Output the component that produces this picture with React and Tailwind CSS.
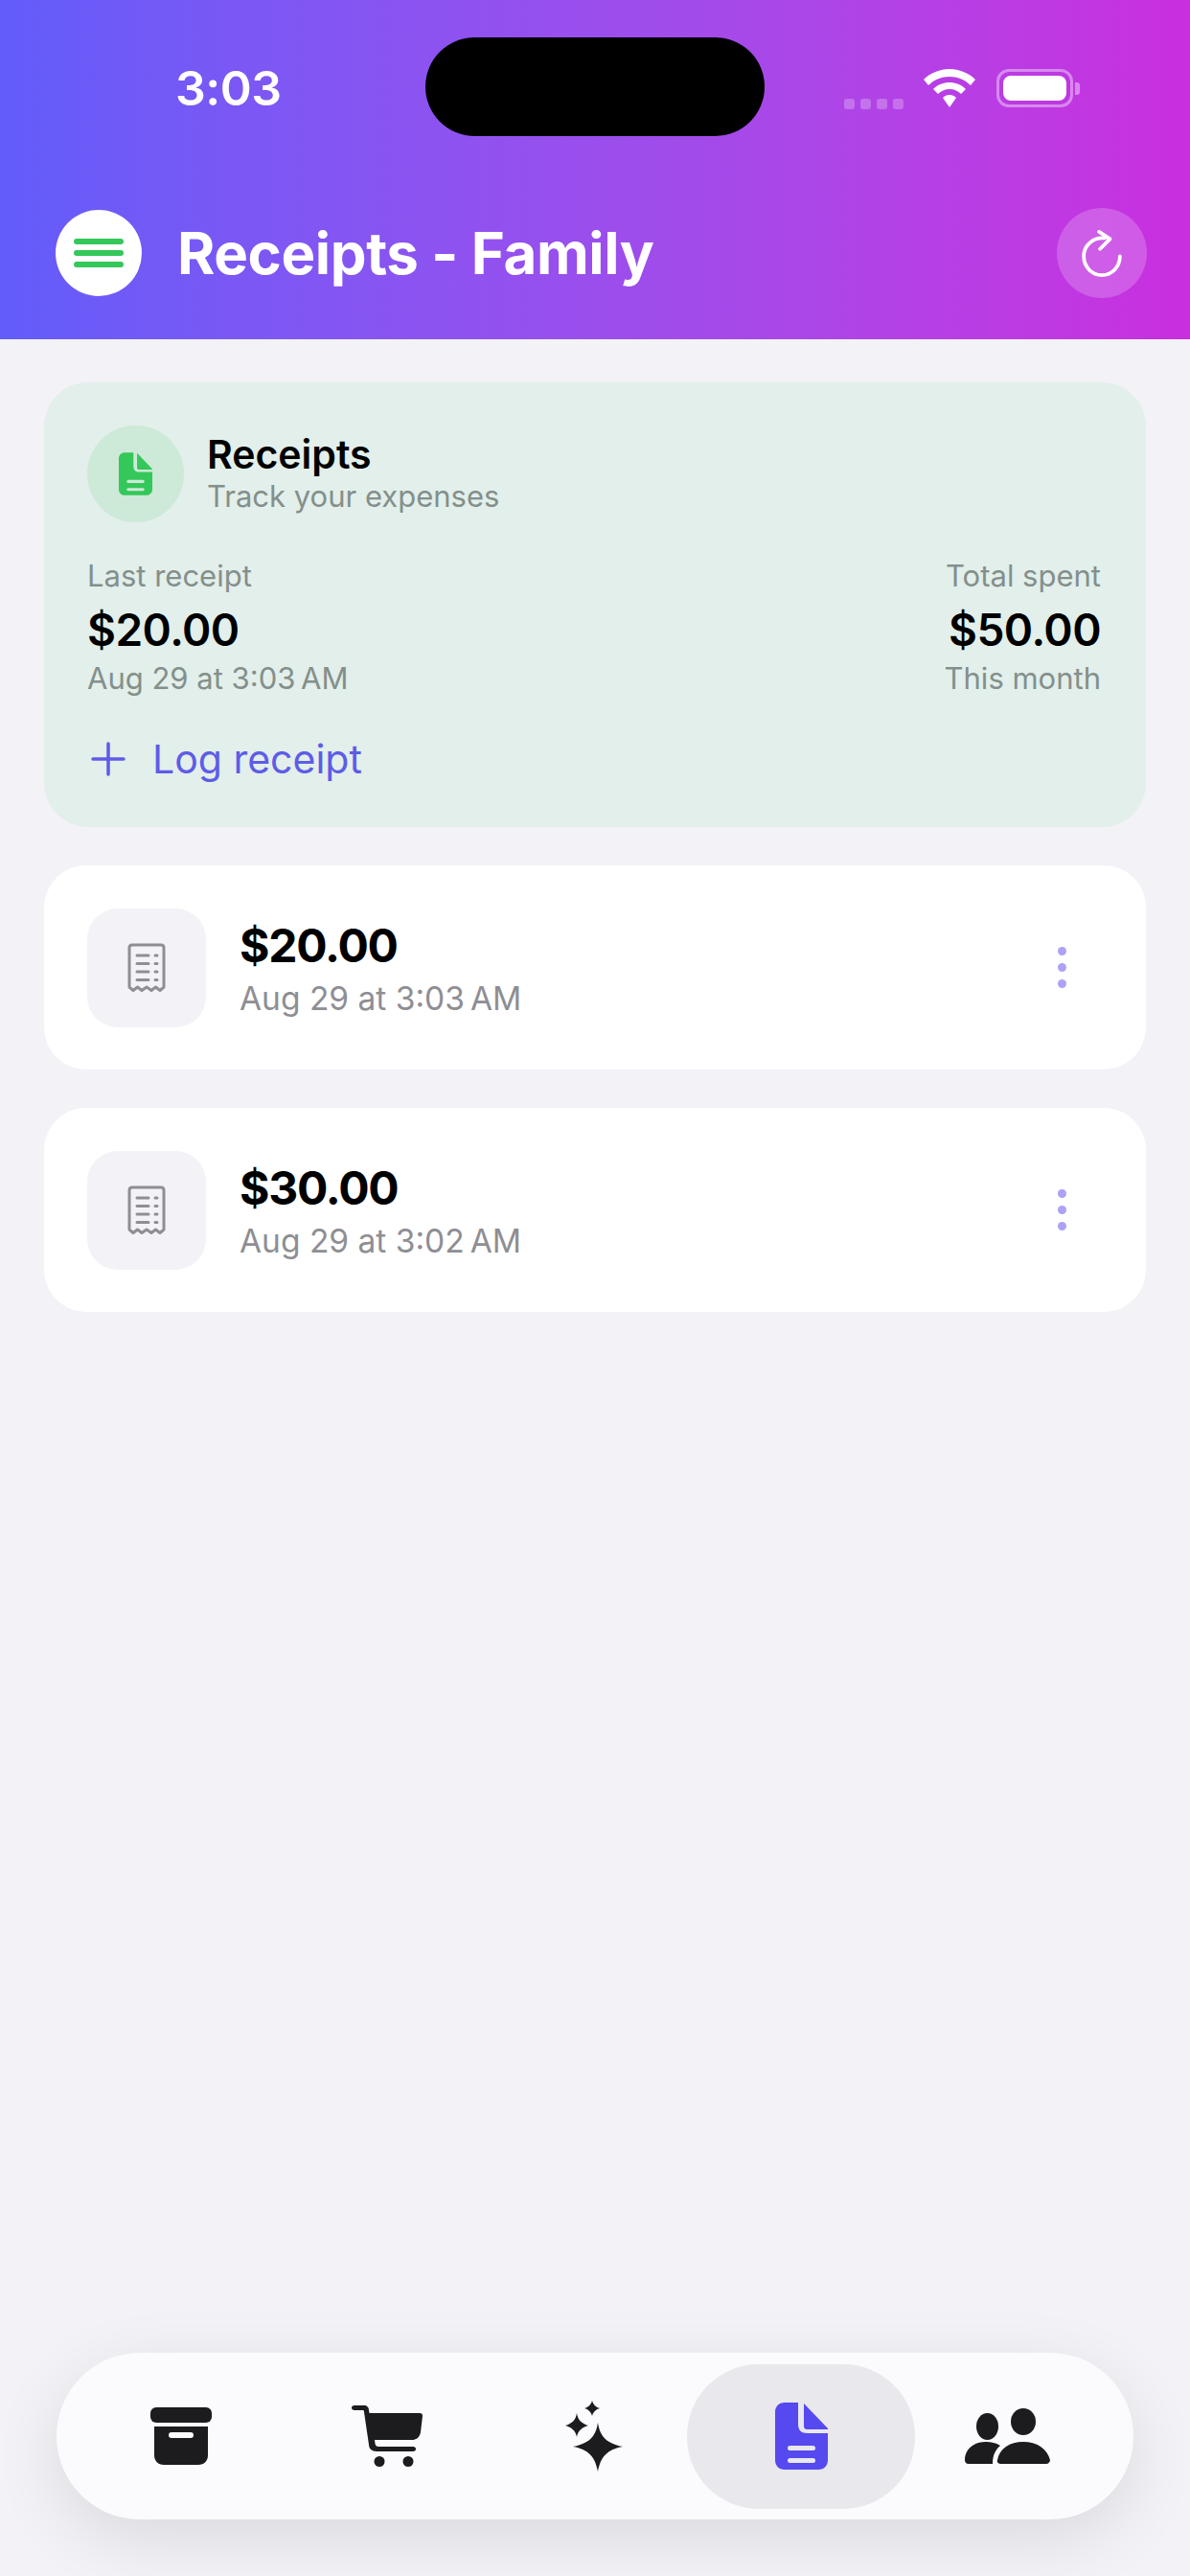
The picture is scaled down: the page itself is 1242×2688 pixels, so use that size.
const font = { fontFamily: "Inter, 'Noto Sans', sans-serif" };

function DocIcon({ className, cut = "#ffffff" }) {
  return (
    <svg viewBox="0 0 55 70" className={className} fill="currentColor">
      <path d="M10 0H24V22C24 29 27 32 34 32H55V60C55 66 51 70 45 70H10C4 70 0 66 0 60V10C0 4 4 0 10 0Z" />
      <path d="M30 1L55 27V28H34C31 28 30 27 30 24Z" />
      <rect x="13" y="45" width="29" height="5" rx="2.5" fill={cut} />
      <rect x="13" y="58" width="29" height="5" rx="2.5" fill={cut} />
    </svg>
  );
}

function ReceiptIcon() {
  return (
    <svg viewBox="0 0 40 52" className="w-[40px] h-[52px]" fill="none" stroke="#8e8e93">
      <path
        d="M2 46V5C2 3 3 2 5 2H35C37 2 38 3 38 5V46L34 49.5L29.5 46L25 49.5L20 46L15 49.5L10.5 46L6 49.5Z"
        strokeWidth="3"
        strokeLinejoin="round"
      />
      <g strokeWidth="3" strokeLinecap="round">
        <path d="M10 13H22M29 13H31" />
        <path d="M10 21.5H22M29 21.5H31" />
        <path d="M10 30H22M29 30H31" />
        <path d="M10 38.5H22M29 38.5H31" />
      </g>
    </svg>
  );
}

function Row({ amount, date }) {
  return (
    <div className="flex items-center h-[213px] bg-white rounded-[44px] pl-[45px] pr-[83px]">
      <div className="w-[124px] h-[124px] rounded-[32px] bg-[#f2f2f7] flex items-center justify-center">
        <ReceiptIcon />
      </div>
      <div className="ml-[35px] flex-1">
        <div className="text-[48px] leading-[60px] font-bold tracking-[-1.2px] text-black">{amount}</div>
        <div className="text-[33.5px] leading-[42px] mt-[4px] text-[#8e8e93]">{date}</div>
      </div>
      <div className="flex flex-col gap-[8px]">
        <span className="w-[9px] h-[9px] rounded-full bg-[#aca2f6]" />
        <span className="w-[9px] h-[9px] rounded-full bg-[#aca2f6]" />
        <span className="w-[9px] h-[9px] rounded-full bg-[#aca2f6]" />
      </div>
    </div>
  );
}

function TabBar() {
  return (
    <div className="mt-auto mb-[59px] mx-[59px] h-[174px] rounded-[87px] bg-[#fbfbfe] shadow-[0_20px_70px_rgba(0,0,0,0.1)] flex items-center text-[#1c1c1e]">
      <div className="w-[260px] flex justify-center">
        <svg viewBox="0 0 64 60" className="w-[64px] h-[60px]" fill="currentColor">
          <rect x="0" y="0" width="64" height="16" rx="6" />
          <path d="M4 20H60V50C60 56 56 60 50 60H14C8 60 4 56 4 50ZM22 26C20 26 19 27 19 29C19 31 20 32 22 32H42C44 32 45 31 45 29C45 27 44 26 42 26Z" fillRule="evenodd" />
        </svg>
      </div>
      <div className="w-[170px] flex justify-center">
        <svg viewBox="0 0 74 64" className="w-[74px] h-[64px]" fill="currentColor">
          <path d="M3 0H13C16 0 18 2 18 5L18.5 8H71C73 8 74 9 74 11L72 28C71 33 68 36 63 36H24L24.500 40C25 42 26 43 28 43H64C66 43 67 44 67 45.500C67 47 66 48 64 48H26C21 48 18 45 18 41L13 7C13 5 12 5 11 5H3C1 5 0 4 0 2.500C0 1 1 0 3 0Z" />
          <circle cx="29" cy="58.500" r="5.500" />
          <circle cx="59" cy="58.500" r="5.500" />
        </svg>
      </div>
      <div className="w-[228px] flex justify-center pl-[36px]">
        <svg viewBox="0 0 62 74" className="w-[62px] h-[74px]" fill="currentColor">
          <path d="M34 23C36 38 44 45 60 48C44 51 37 58 34 74C31 58 24 51 8 48C24 45 32 38 34 23Z" />
          <path d="M12 13C13 20 17 24 24 26C17 28 13 32 12 38C11 32 7 28 0 26C7 24 11 20 12 13Z" />
          <path d="M28 0C29 4 32 7 36 8C32 9 29 12 28 16C27 12 24 9 20 8C24 7 27 4 28 0Z" />
        </svg>
      </div>
      <div className="w-[238px] h-[151px] rounded-[75px] bg-[#e8e8ed] flex items-center justify-center">
        <DocIcon className="w-[55px] h-[70px] text-[#5649ef]" cut="#e8e8ed" />
      </div>
      <div className="w-[228px] flex justify-center pr-[35px]">
        <svg viewBox="0 0 89 58" className="w-[89px] h-[58px]" fill="currentColor">
          <ellipse cx="23.500" cy="14" rx="11.500" ry="14" transform="translate(0 5)" />
          <ellipse cx="61" cy="14" rx="13" ry="14" />
          <path d="M0 54C0 42 10 35 22 35C28 35 32 36 37 39C32 43 29 49 29 58H4C1 58 0 56 0 54Z" />
          <path d="M34 54C36 42 47 35 61 35C75 35 86 42 89 54C89 56 87 58 85 58H38C35 58 33 56 34 54Z" />
        </svg>
      </div>
    </div>
  );
}

export default function App() {
  return (
    <div style={font} className="w-[1242px] h-[2688px] bg-[#f2f2f7] flex flex-col overflow-hidden">
      <header className="relative h-[354px] bg-gradient-to-r from-[#625cfa] to-[#c92edf] pl-[58px] pr-[45px]">
        <div className="h-[217px] flex items-center">
          <span className="ml-[125px] mt-[-34px] w-[110px] text-[50px] font-semibold tracking-[-0.5px] text-white leading-none">3:03</span>
          <div className="ml-auto mt-[-34px] flex items-end">
            <div className="flex gap-[6px] mb-[-2px] mr-[21px]">
              <span className="w-[11px] h-[11px] rounded-[3px] bg-white/25" />
              <span className="w-[11px] h-[11px] rounded-[3px] bg-white/25" />
              <span className="w-[11px] h-[11px] rounded-[3px] bg-white/25" />
              <span className="w-[11px] h-[11px] rounded-[3px] bg-white/25" />
            </div>
            <svg viewBox="0 0 54 40" className="w-[54px] h-[40px] mr-[22px]" fill="#ffffff">
              <path d="M27 0C37 0 47 4 54 11L49 17C43 11 35 8 27 8C19 8 11 11 5 17L0 11C7 4 17 0 27 0Z" />
              <path d="M27 14C33 14 39 16 44 21L39 26C36 23 32 21 27 21C22 21 18 23 15 26L10 21C15 16 21 14 27 14Z" />
              <path d="M27 27C30 27 32 28 34 30L27 40L20 30C22 28 24 27 27 27Z" />
            </svg>
            <div className="w-[80px] h-[40px] rounded-[13px] border-[3px] border-white/40 p-[4px] mr-[2px]">
              <div className="w-full h-full rounded-[8px] bg-white" />
            </div>
            <span className="w-[5px] h-[13px] rounded-r-[3px] bg-white/40 mb-[13px] mr-[70px]" />
          </div>
        </div>
        <div className="absolute left-[444px] top-[39px] w-[354px] h-[103px] rounded-[52px] bg-black" />
        <div className="flex items-center h-[94px]">
          <button className="w-[90px] h-[90px] rounded-full bg-white flex flex-col items-center justify-center gap-[6px]">
            <span className="w-[52px] h-[6px] rounded-full bg-[#34c759]" />
            <span className="w-[52px] h-[6px] rounded-full bg-[#34c759]" />
            <span className="w-[52px] h-[6px] rounded-full bg-[#34c759]" />
          </button>
          <h1 className="ml-[37px] text-[60px] font-bold tracking-[-0.4px] text-white leading-none">Receipts - Family</h1>
          <button className="ml-auto w-[94px] h-[94px] rounded-full bg-white/20 flex items-center justify-center">
            <svg viewBox="0 0 44 52" className="w-[42px] h-[49px]" fill="none" stroke="#ffffff" strokeWidth="4" strokeLinecap="round" strokeLinejoin="round">
              <path d="M25 9C12 8 2 17 2 29C2 41 11 50 22 50C33 50 42 41 42 29" />
              <path d="M19 2L31 10L20 21" />
            </svg>
          </button>
        </div>
      </header>

      <main className="flex flex-col px-[46px] pt-[45px]">
        <section className="h-[464px] rounded-[46px] bg-[#e2efea] pl-[45px] pr-[47px] pt-[45px]">
          <div className="flex items-center">
            <div className="w-[101px] h-[101px] rounded-full bg-[#cde9d7] flex items-center justify-center">
              <DocIcon className="w-[35px] h-[45px] text-[#34c759]" cut="#cde9d7" />
            </div>
            <div className="ml-[24px] mt-[-4px]">
              <div className="text-[41px] leading-[50px] font-semibold text-black">Receipts</div>
              <div className="text-[31px] leading-[38px] text-[#848f8c]">Track your expenses</div>
            </div>
          </div>
          <div className="flex justify-between mt-[36px]">
            <div>
              <div className="text-[31px] leading-[40px] text-[#848f8c]">Last receipt</div>
              <div className="text-[46px] leading-[56px] mt-[8px] font-semibold tracking-[-0.5px] text-black">$20.00</div>
              <div className="text-[31px] leading-[46px] text-[#848f8c]">Aug 29 at 3:03{"\u202f"}AM</div>
            </div>
            <div className="text-right">
              <div className="text-[31px] leading-[40px] text-[#848f8c]">Total spent</div>
              <div className="text-[46px] leading-[56px] mt-[8px] font-semibold tracking-[-0.5px] text-black">$50.00</div>
              <div className="text-[31px] leading-[46px] text-[#848f8c]">This month</div>
            </div>
          </div>
          <div className="flex items-center mt-[36px] text-[#5e5ce6]">
            <svg viewBox="0 0 36 36" className="w-[36px] h-[36px] ml-[4px]" fill="none" stroke="currentColor" strokeWidth="3.500" strokeLinecap="round">
              <path d="M18 2V34M2 18H34" />
            </svg>
            <span className="ml-[28px] text-[41px] leading-[50px]">Log receipt</span>
          </div>
        </section>
        <div className="flex flex-col gap-[40px] mt-[40px]">
          <Row amount="$20.00" date={"Aug 29 at 3:03\u202fAM"} />
          <Row amount="$30.00" date={"Aug 29 at 3:02\u202fAM"} />
        </div>
      </main>

      <TabBar />
    </div>
  );
}
